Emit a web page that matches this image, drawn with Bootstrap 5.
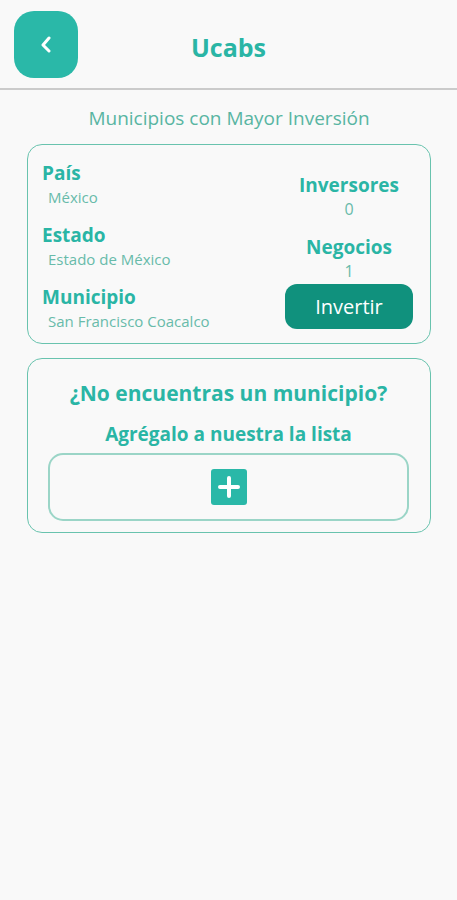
<!DOCTYPE html>
<html lang="es">
<head>
<meta charset="utf-8">
<meta name="viewport" content="width=device-width, initial-scale=1">
<title>Ucabs</title>
<link href="https://cdn.jsdelivr.net/npm/bootstrap@5.3.0/dist/css/bootstrap.min.css" rel="stylesheet">
<style>
  body { background: #f9f9f9; color: #2ab5a5; font-family: "Open Sans", "Noto Sans", sans-serif; }
  .topbar { display: grid; grid-template-columns: 64px 1fr 64px; padding: 11px 14px 10px; border-bottom: 2px solid #cbcbcb; }
  .back-btn { height: 67px; border-radius: 20px; background: #2ab8a8; }
  .app-title { font-size: 25px; line-height: 34px; font-weight: 700; padding-top: 4px; }
  .subtitle { font-size: 19px; line-height: 26px; font-weight: 400; padding: 15px 0 13px; color: #58b5a2; }
  .content { padding: 0 26px 0 27px; }
  .panel { border: 1px solid #69c3ae; border-radius: 15px; }
  .town { padding: 16px 17px 10px 14px; }
  .term { font-size: 19px; line-height: 24px; font-weight: 700; }
  .detail { font-size: 15px; line-height: 24px; font-weight: 400; color: #68bbaa; margin: 0 0 14px; }
  .places .detail { padding-left: 6px; }
  .stats { width: 128px; padding-top: 12px; }
  .stats .detail { font-size: 16px; }
  .stats .detail:last-child { margin: 0 0 1px; }
  .invest-btn { height: 45px; border-radius: 12px; background: #10917d; color: #fff; font-size: 20px; line-height: 28px; }
  .add-panel { margin-top: 14px; padding: 19px 21px 11px 20px; }
  .question { font-size: 21px; line-height: 30px; font-weight: 700; }
  .hint { font-size: 19px; line-height: 26px; font-weight: 700; padding: 13px 0 6px; }
  .add-btn { height: 68px; border: 2px solid #9bd5c7; border-radius: 15px; }
</style>
<script src="https://cdn.jsdelivr.net/npm/bootstrap@5.3.0/dist/js/bootstrap.bundle.min.js" defer></script>
</head>
<body>
<header class="topbar align-items-center">
  <button type="button" class="back-btn btn border-0 p-0 d-flex align-items-center justify-content-center" aria-label="Volver">
    <svg width="12" height="18" viewBox="0 0 12 18" fill="none" stroke="#fff" stroke-width="3" stroke-linecap="round" stroke-linejoin="round" aria-hidden="true"><path d="M9 2 3 9l6 6"/></svg>
  </button>
  <h1 class="app-title text-center m-0">Ucabs</h1>
</header>
<main class="content">
  <h2 class="subtitle text-center m-0">Municipios con Mayor Inversión</h2>
  <section class="panel town d-flex justify-content-between">
    <dl class="places m-0">
      <dt class="term">País</dt><dd class="detail">México</dd>
      <dt class="term">Estado</dt><dd class="detail">Estado de México</dd>
      <dt class="term">Municipio</dt><dd class="detail mb-0">San Francisco Coacalco</dd>
    </dl>
    <div class="stats text-center">
      <dl class="m-0">
        <dt class="term">Inversores</dt><dd class="detail">0</dd>
        <dt class="term">Negocios</dt><dd class="detail">1</dd>
      </dl>
      <button type="button" class="invest-btn btn border-0 w-100 p-0">Invertir</button>
    </div>
  </section>
  <section class="panel add-panel text-center">
    <h2 class="question m-0">¿No encuentras un municipio?</h2>
    <p class="hint m-0">Agrégalo a nuestra la lista</p>
    <button type="button" class="add-btn btn w-100 p-0 d-flex align-items-center justify-content-center" aria-label="Agregar municipio">
      <svg width="36" height="36" viewBox="0 0 36 36" aria-hidden="true"><rect width="36" height="36" rx="3" fill="#2ab8a8"/><path d="M18 9v18M9 18h18" stroke="#fff" stroke-width="4" stroke-linecap="round"/></svg>
    </button>
  </section>
</main>
</body>
</html>
